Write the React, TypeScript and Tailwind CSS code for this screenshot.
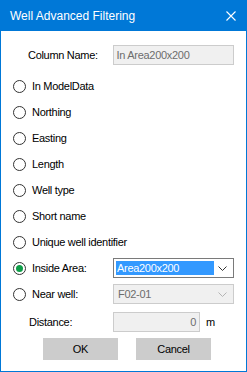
import React from "react";

const options = [
  "In ModelData",
  "Northing",
  "Easting",
  "Length",
  "Well type",
  "Short name",
  "Unique well identifier",
];

function Radio({ checked = false }: { checked?: boolean }) {
  return (
    <span className="flex h-[13px] w-[13px] shrink-0 items-center justify-center rounded-full border border-[#333333] bg-white">
      {checked && <span className="h-[7px] w-[7px] rounded-full bg-[#0f9d48]" />}
    </span>
  );
}

function Chevron({ disabled = false }: { disabled?: boolean }) {
  return (
    <svg width="9" height="5" viewBox="0 0 9 5" className="shrink-0">
      <path d="M0.5 0.5 L4.5 4.5 L8.5 0.5" fill="none" stroke={disabled ? "#b4b4b4" : "#333333"} strokeWidth="1" />
    </svg>
  );
}

export default function App() {
  return (
    <div
      className="flex h-[372px] w-[247px] flex-col border-x border-b border-[#0078d7] bg-white text-[11px] tracking-[-0.3px] text-black"
      style={{ fontFamily: '"Liberation Sans", Arial, sans-serif' }}
    >
      <div className="-mx-px flex h-[31px] shrink-0 items-center justify-between bg-[#0078d7] pl-[10px] pr-[11px]">
        <span className="text-[12px] tracking-normal text-white">Well Advanced Filtering</span>
        <svg width="10" height="10" viewBox="0 0 10 10">
          <path d="M0.5 0.5 L9.5 9.5 M9.5 0.5 L0.5 9.5" stroke="#ffffff" strokeWidth="1.1" />
        </svg>
      </div>

      <div className="flex flex-col pl-[12px] pt-[11px] pr-[12px]">
        <div className="flex h-[26px] items-center">
          <span className="w-[100px] whitespace-nowrap pl-[15px]">Column Name:</span>
          <div className="flex h-[20px] w-[122px] items-center border border-[#cccccc] bg-[#f0f0f0] pl-[3px] text-[#6d6d6d]">
            In Area200x200
          </div>
        </div>

        <div className="mt-[5px] flex flex-col">
          {options.map((label) => (
            <div key={label} className="flex h-[26px] items-center gap-[6px]">
              <Radio />
              <span>{label}</span>
            </div>
          ))}

          <div className="flex h-[26px] items-center">
            <div className="flex w-[100px] items-center gap-[6px]">
              <Radio checked />
              <span>Inside Area:</span>
            </div>
            <div className="flex h-[20px] w-[121px] items-center border border-[#7a7a7a] bg-white pl-[2px] pr-[6px]">
              <span className="flex h-[14px] w-[98px] items-center bg-[#3399ff] pl-[1px] text-white">Area200x200</span>
              <span className="flex-1" />
              <Chevron />
            </div>
          </div>

          <div className="flex h-[26px] items-center">
            <div className="flex w-[100px] items-center gap-[6px]">
              <Radio />
              <span>Near well:</span>
            </div>
            <div className="flex h-[20px] w-[121px] items-center border border-[#cccccc] bg-[#f0f0f0] pl-[4px] pr-[6px] text-[#6d6d6d]">
              <span>F02-01</span>
              <span className="flex-1" />
              <Chevron disabled />
            </div>
          </div>
        </div>

        <div className="mt-[2px] flex h-[26px] items-center">
          <span className="w-[100px] pl-[16px]">Distance:</span>
          <div className="flex h-[20px] w-[87px] items-center justify-end border border-[#cccccc] bg-[#f0f0f0] pr-[3px] text-[#6d6d6d]">
            0
          </div>
          <span className="ml-[6px]">m</span>
        </div>

        <div className="mt-[3px] flex h-[22px] gap-[18px] pl-[30px]">
          <button className="flex w-[75px] items-center justify-center bg-[#cccccc]">OK</button>
          <button className="flex w-[75px] items-center justify-center bg-[#cccccc]">Cancel</button>
        </div>
      </div>
    </div>
  );
}
